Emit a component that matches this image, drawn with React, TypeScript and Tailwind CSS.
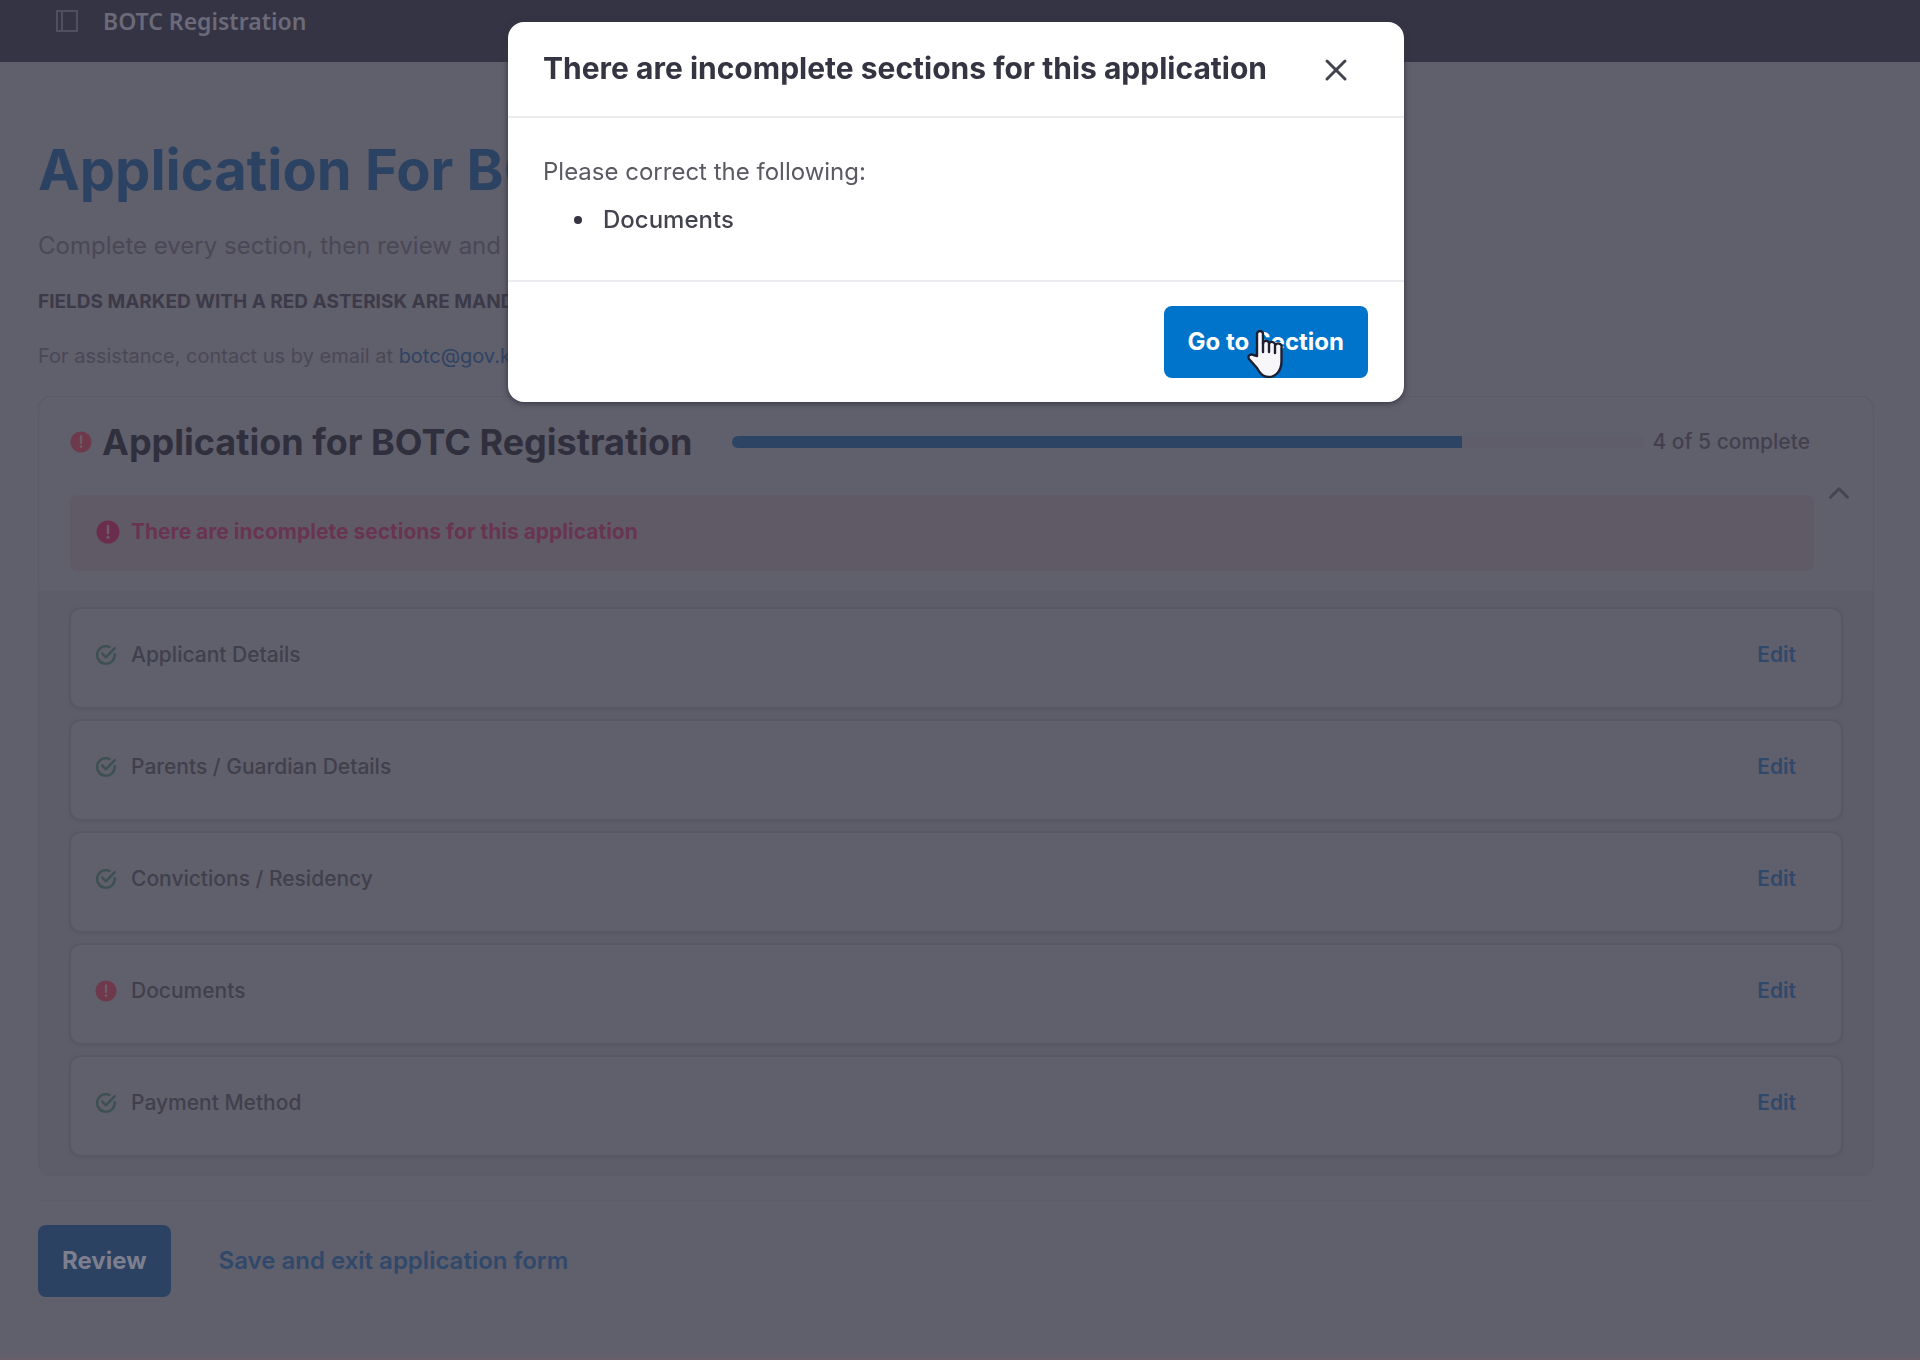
import { useState } from "react";
import { X, ChevronUp } from "lucide-react";

type Section = { name: string; done: boolean };

const SECTIONS: Section[] = [
  { name: "Applicant Details", done: true },
  { name: "Parents / Guardian Details", done: true },
  { name: "Convictions / Residency", done: true },
  { name: "Documents", done: false },
  { name: "Payment Method", done: true },
];

function AlertIcon({ className }: { className: string }) {
  return (
    <svg viewBox="0 0 24 24" className={className} aria-hidden="true">
      <circle cx="12" cy="12" r="11.5" fill="currentColor" />
      <path d="M12 6v7" stroke="#6f5a68" strokeWidth="2.6" strokeLinecap="round" />
      <circle cx="12" cy="17.2" r="1.6" fill="#6f5a68" />
    </svg>
  );
}

function CheckIcon() {
  return (
    <svg viewBox="0 0 24 24" className="size-[22px] shrink-0 text-[#3b5050]" fill="none" stroke="currentColor" strokeWidth="2.6" strokeLinecap="round" strokeLinejoin="round" aria-hidden="true">
      <path d="M21.500 11v1a9.600 9.600 0 1 1-5.700-8.800" />
      <path d="M21.500 4.500 12 14.500l-4-4" />
    </svg>
  );
}

function PanelIcon() {
  return (
    <svg viewBox="0 0 22 22" className="size-[22px] shrink-0 text-[#504f5e]" fill="none" stroke="currentColor" strokeWidth="2" aria-hidden="true">
      <path d="M1 1h20v20H1zM6 1v20" />
    </svg>
  );
}

function HandCursor() {
  return (
    <svg viewBox="0 0 36 48" className="pointer-events-none absolute left-[83px] top-6 h-12 w-9" aria-hidden="true">
      <path
        d="M10 26V4a3 3 0 0 1 6 0v9.500a3 3 0 0 1 6 .8 3 3 0 0 1 6 1.500 3 3 0 0 1 6.500 2V31c0 9-5 16-13 16-6 0-9-4-11.500-9L2 29c-2-3.500 2-5.500 4.500-4z"
        fill="#f7f7fa"
        stroke="#1d1f33"
        strokeWidth="2.4"
        strokeLinejoin="round"
      />
      <path d="M16 13v9M22 15v7M28 17v6" stroke="#1d1f33" strokeWidth="2.4" strokeLinecap="round" />
    </svg>
  );
}

function SectionRow({ section }: { section: Section }) {
  return (
    <li className="flex items-center rounded-xl border-2 border-[#595762] bg-[#605f6c] pt-8 pr-[45px] pb-[38px] pl-6 text-[21px] leading-7 shadow-[0_1px_2px_#5a5863]">
      {section.done ? <CheckIcon /> : <AlertIcon className="size-[22px] shrink-0 text-[#6e394a]" />}
      <span className="ml-3.5 font-medium text-[#403f4c]">{section.name}</span>
      <button type="button" aria-label={`Edit ${section.name}`} className="ml-auto font-semibold text-[#30486a]">
        Edit
      </button>
    </li>
  );
}

function IncompleteDialog({ onClose }: { onClose: () => void }) {
  const missing = SECTIONS.filter((s) => !s.done);

  return (
    <div className="fixed inset-0 flex items-start justify-center pt-[22px] pr-2">
      <div role="dialog" aria-modal="true" aria-labelledby="dialog-title" className="w-full max-w-[896px] rounded-2xl bg-white shadow-[0_1px_6px_#33313f]">
        <div className="flex items-center justify-between border-b-2 border-[#ededf1] pt-6 pr-[50px] pb-[26px] pl-[35px]">
          <h2 id="dialog-title" className="text-[30px] leading-[44px] font-bold text-[#343442]">
            There are incomplete sections for this application
          </h2>
          <button type="button" aria-label="Close" onClick={onClose} className="mt-1 text-[#43434f]">
            <X size={36} strokeWidth={2} />
          </button>
        </div>
        <div className="px-[35px] pt-[38px] pb-11 text-[24px] leading-8">
          <p className="text-[#5a5a62]">Please correct the following:</p>
          <ul className="mt-4 pl-[31px] font-medium text-[#43434f]">
            {missing.map((s) => (
              <li key={s.name} className="flex items-center gap-[21px]">
                <span className="size-2 rounded-full bg-[#343442]" />
                {s.name}
              </li>
            ))}
          </ul>
        </div>
        <div className="flex justify-end border-t-2 border-[#ededf1] pt-6 pr-9 pb-6">
          <div className="relative">
            <button type="button" onClick={onClose} className="h-[72px] rounded-lg bg-[#0073cb] px-6 text-[24px] font-bold text-white">
              Go to Section
            </button>
            <HandCursor />
          </div>
        </div>
      </div>
    </div>
  );
}

export default function App() {
  const [dialogOpen, setDialogOpen] = useState(true);
  const [expanded, setExpanded] = useState(true);
  const done = SECTIONS.filter((s) => s.done).length;

  return (
    <div className="flex min-h-screen flex-col border-b-4 border-[#675f6a] bg-[#605f6c] font-['Inter',sans-serif]">
      <header className="flex items-center gap-[25px] bg-[#353445] pt-[3px] pr-6 pb-[23px] pl-14">
        <PanelIcon />
        <span className="font-['Noto_Sans',sans-serif] text-[23px] leading-9 font-semibold text-[#6b6a78]">BOTC Registration</span>
      </header>

      <main className="pt-[76px] pr-[46px] pb-[60px] pl-[38px]">
        <h1 className="text-[56px] leading-[64px] font-bold text-[#2c4263]">Application For BOTC Registration</h1>
        <p className="mt-7 text-[24px] leading-8 text-[#4a4856]">Complete every section, then review and submit.</p>
        <p className="mt-7 text-[19px] leading-6 font-bold text-[#3c3a48]">FIELDS MARKED WITH A RED ASTERISK ARE MANDATORY</p>
        <p className="mt-[30px] text-[20px] leading-6 text-[#4a4856]">
          For assistance, contact us by email at{" "}
          <a href="mailto:botc@gov.ky" className="text-[#2f4363]">
            botc@gov.ky
          </a>
        </p>

        <section className="mt-7 rounded-xl border border-[#5c5a67] bg-[#5d5c69]">
          <div className="flex items-center gap-2 rounded-t-xl bg-[#605f6c] pt-[23px] pr-[17px] pb-5 pl-[31px]">
            <div className="flex-1">
              <div className="flex items-center">
                <AlertIcon className="size-[22px] shrink-0 text-[#6e394a]" />
                <h2 className="ml-2.5 text-[36px] leading-[44px] font-bold text-[#302f3d]">Application for BOTC Registration</h2>
                <div role="progressbar" aria-label="Sections complete" aria-valuenow={done} aria-valuemax={SECTIONS.length} className="mr-2 ml-10 h-3 flex-1 overflow-hidden rounded-full bg-[#5f5d6a]">
                  <div className="h-full bg-[#2d4465]" style={{ width: `${(done / SECTIONS.length) * 100}%` }} />
                </div>
                <span className="pr-1 text-[21px] leading-7 font-medium text-[#42404e]">
                  {done} of {SECTIONS.length} complete
                </span>
              </div>
              <div role="alert" className="mt-[31px] flex items-center gap-[11px] rounded-lg bg-[#605a67] pt-[23px] pb-[25px] pl-[26px]">
                <AlertIcon className="size-6 shrink-0 text-[#6a2d4e]" />
                <span className="text-[21px] leading-7 font-bold text-[#693452]">There are incomplete sections for this application</span>
              </div>
            </div>
            <button type="button" aria-label="Toggle sections" aria-expanded={expanded} onClick={() => setExpanded(!expanded)} className="mb-1.5 text-[#464452]">
              <ChevronUp size={34} strokeWidth={2} />
            </button>
          </div>
          {expanded && (
            <ul className="flex flex-col gap-2.5 pt-4 pr-[30px] pb-[18px] pl-[30px]">
              {SECTIONS.map((s) => (
                <SectionRow key={s.name} section={s} />
              ))}
            </ul>
          )}
        </section>

        <div className="mt-6 flex items-center gap-12 border-t border-[#5e5c69] pt-6">
          <button type="button" className="h-[72px] rounded-lg bg-[#2c4263] px-6 text-[24px] font-bold text-[#7d7f8e]">
            Review
          </button>
          <a href="#save" className="text-[24px] leading-8 font-semibold text-[#30486a]">
            Save and exit application form
          </a>
        </div>
      </main>

      {dialogOpen && <IncompleteDialog onClose={() => setDialogOpen(false)} />}
    </div>
  );
}
